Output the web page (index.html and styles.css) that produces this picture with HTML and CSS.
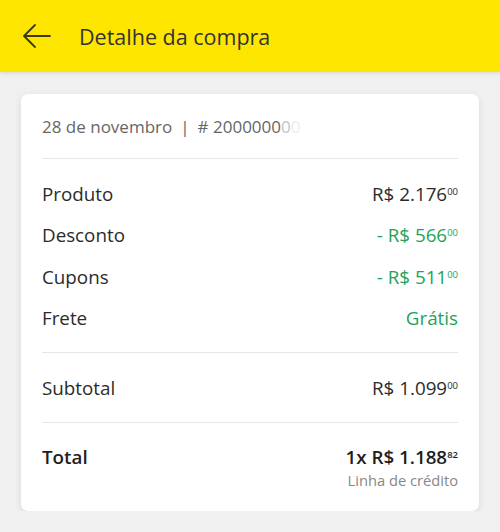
FILE: index.html
```html
<!DOCTYPE html>
<html lang="pt-BR">
<head>
  <meta charset="UTF-8">
  <title>Detalhe da compra</title>
  <link rel="stylesheet" href="styles.css">
</head>
<body>
  <!-- Barra superior -->
  <header class="topbar">
    <svg class="back" width="30" height="26" viewBox="0 0 30 26">
      <path d="M28 13H3M13 2L2 13l11 11" fill="none" stroke="#3a3a1a" stroke-width="1.8" stroke-linecap="round" stroke-linejoin="round"/>
    </svg>
    <h1>Detalhe da compra</h1>
  </header>

  <!-- Cartão com o resumo -->
  <main class="card">
    <div class="meta">
      <span>28 de novembro</span>
      <span class="sep">|</span>
      <span># 2000000<span class="fade">0</span><span class="fade2">0</span></span>
    </div>

    <div class="group">
      <div class="row"><span>Produto</span><span class="price">R$ 2.176<sup>00</sup></span></div>
      <div class="row"><span>Desconto</span><span class="price green">- R$ 566<sup>00</sup></span></div>
      <div class="row"><span>Cupons</span><span class="price green">- R$ 511<sup>00</sup></span></div>
      <div class="row"><span>Frete</span><span class="price green">Grátis</span></div>
    </div>

    <div class="group">
      <div class="row"><span>Subtotal</span><span class="price">R$ 1.099<sup>00</sup></span></div>
    </div>

    <div class="group total">
      <div class="row"><span>Total</span><span class="price">1x R$ 1.188<sup>82</sup></span></div>
      <div class="note">Linha de crédito</div>
    </div>
  </main>
</body>
</html>
```

FILE: styles.css
```css
body {
  margin: 0;
  background: #f0f0f0;
  font-family: "Open Sans", Lato, sans-serif;
  color: #333;
}

/* Barra amarela */
.topbar {
  height: 72px;
  background: #ffe600;
  display: flex;
  align-items: center;
  padding-left: 22px;
  box-shadow: 0 1px 4px rgba(0, 0, 0, 0.12);
}

.back {
  margin-right: 27px;
}

.topbar h1 {
  margin: 0;
  font-size: 21.5px;
  font-weight: 400;
  color: #333;
}

/* Cartão */
.card {
  margin: 22px 21px 0;
  background: #fff;
  border-radius: 7px;
  box-shadow: 0 2px 6px rgba(0, 0, 0, 0.1);
  padding: 0 21px 21px;
}

.meta {
  height: 64px;
  display: flex;
  align-items: center;
  font-size: 17px;
  color: #666;
  border-bottom: 1px solid #e6e6e6;
}

.meta .sep {
  margin: 0 8px;
}

.meta .fade {
  color: #c4c4c4;
}

.meta .fade2 {
  color: #ececec;
}

.group {
  padding: 14px 0 13px;
  border-bottom: 1px solid #e6e6e6;
}

.group.total {
  border-bottom: none;
  padding-bottom: 0;
}

.row {
  display: flex;
  justify-content: space-between;
  align-items: center;
  height: 41.5px;
  font-size: 18.8px;
  color: #2b2b2b;
}

.price sup {
  font-size: 9.5px;
  vertical-align: 6px;
}

.green {
  color: #1fa25a;
}

.total .row {
  font-weight: 600;
  color: #1e1e1e;
}

.note {
  text-align: right;
  font-size: 14.7px;
  color: #888;
  margin-top: -8px;
}
```
